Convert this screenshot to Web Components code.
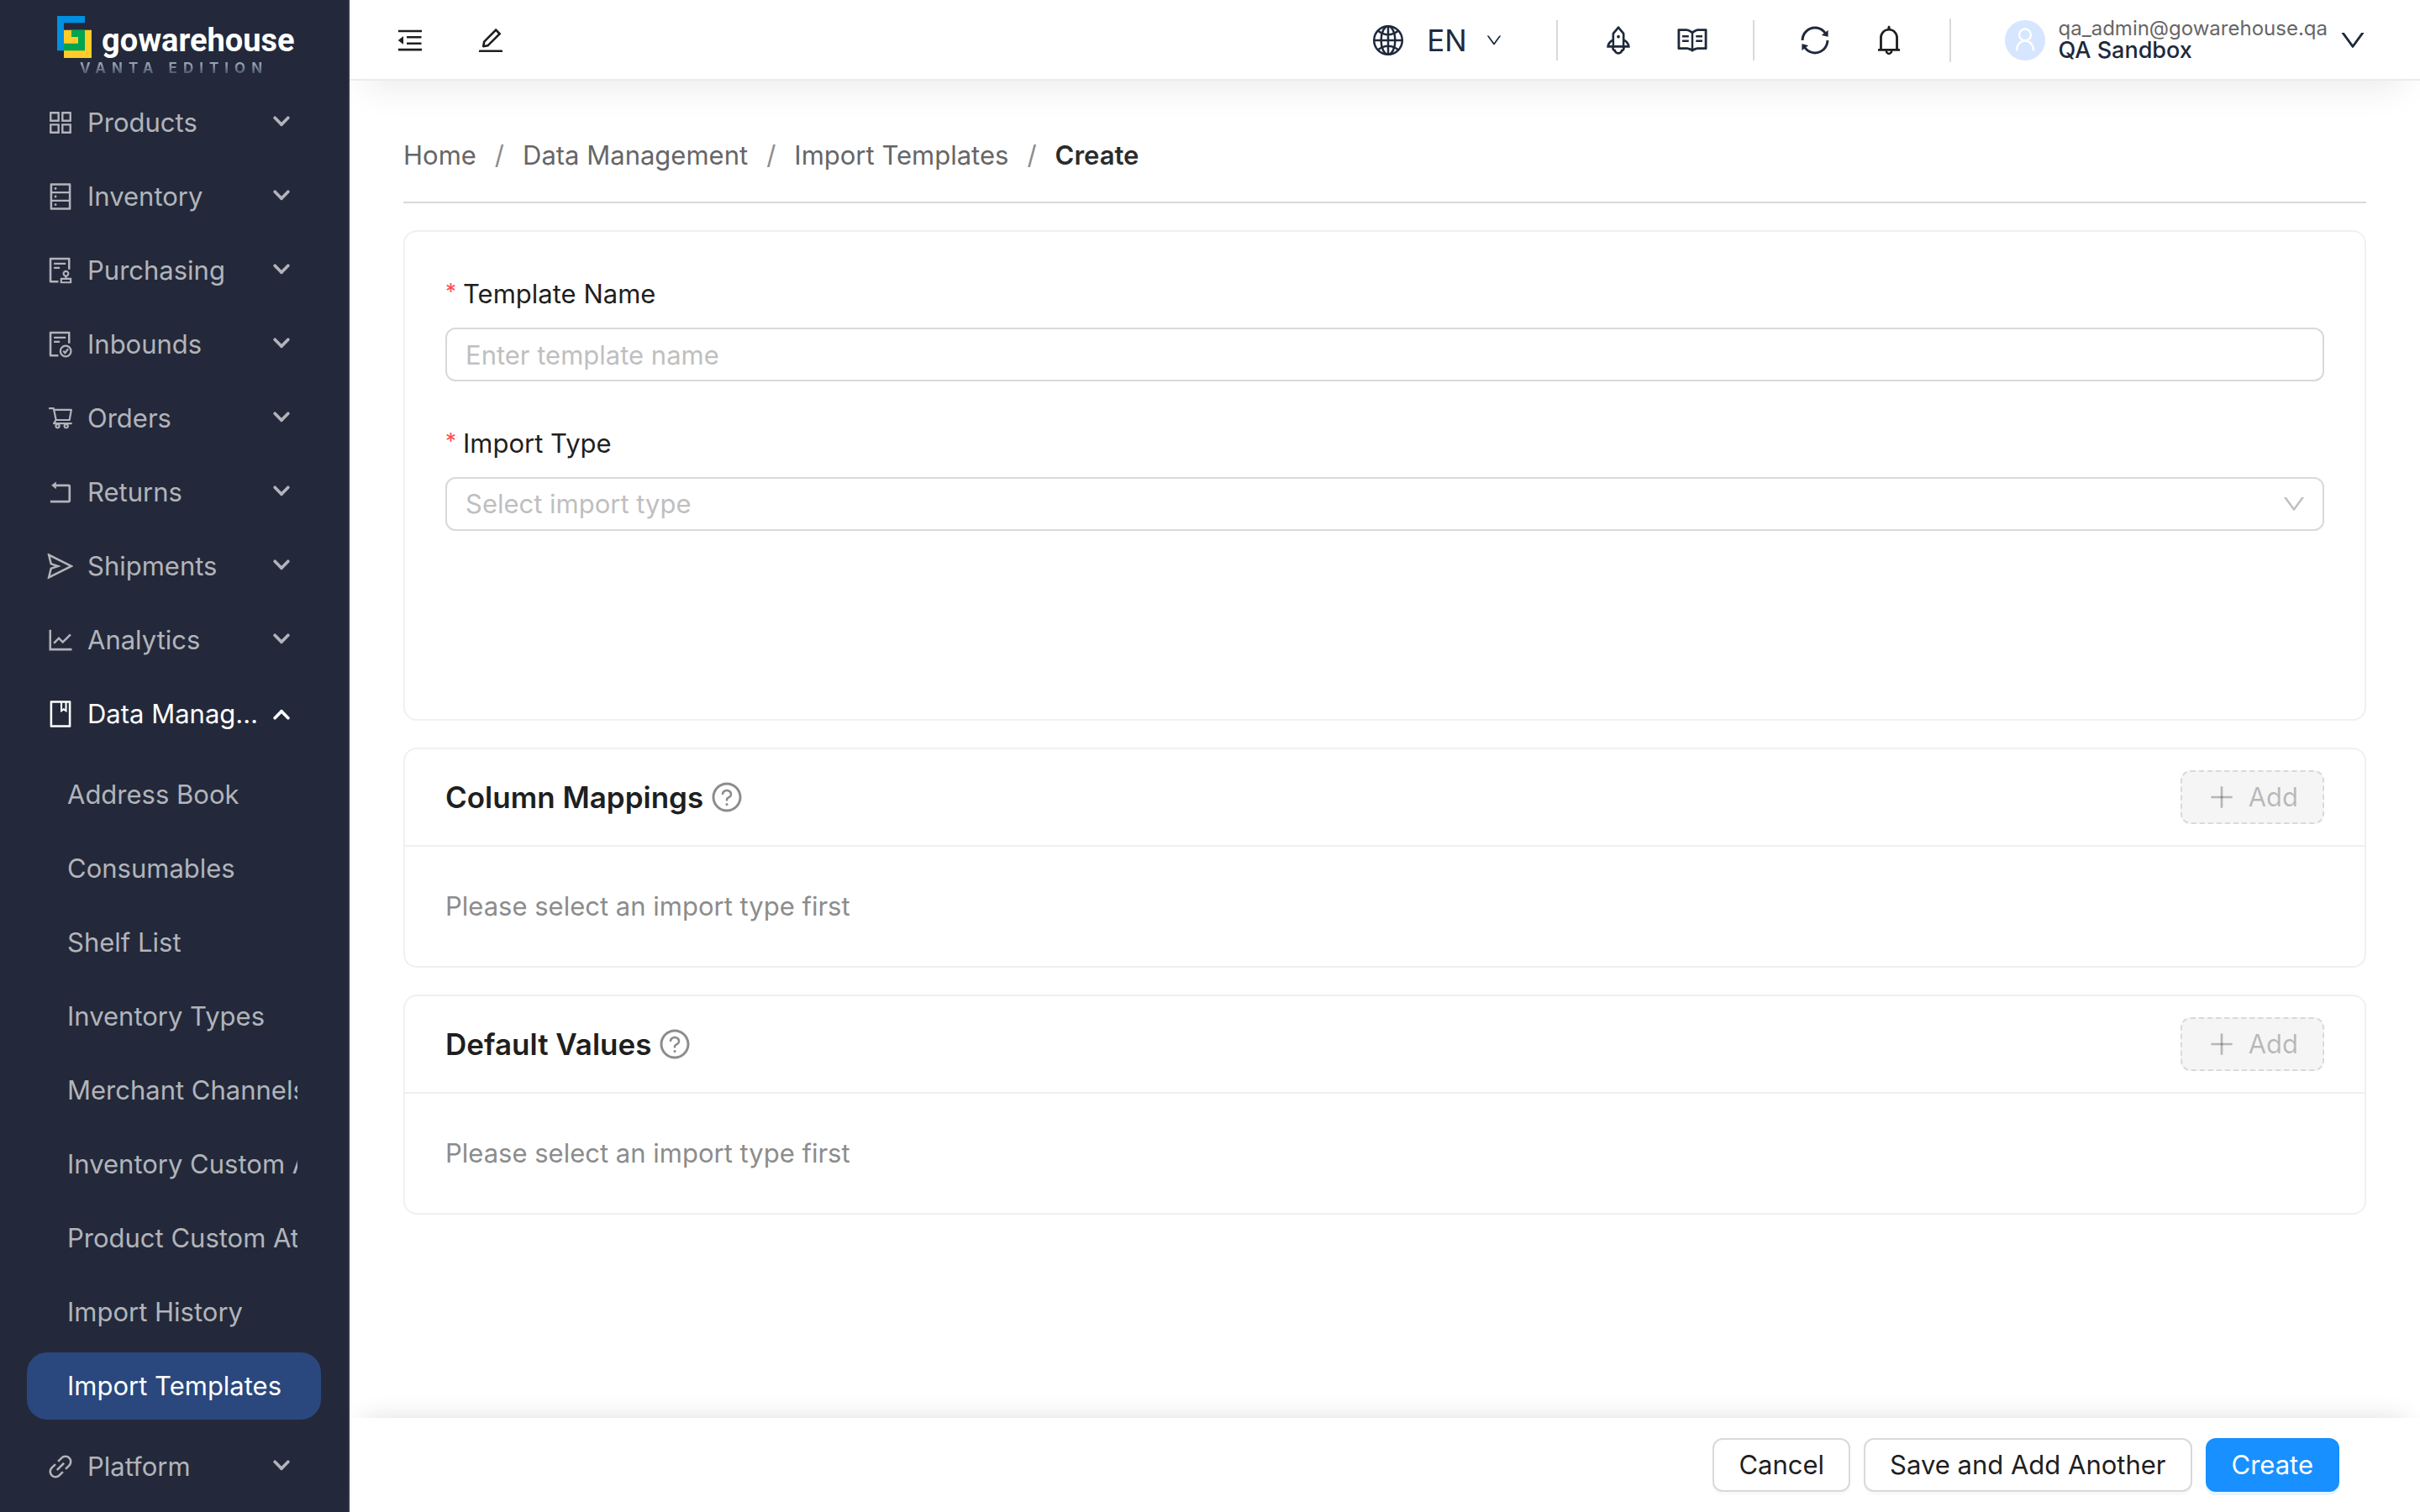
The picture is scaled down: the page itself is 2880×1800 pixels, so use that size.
<!DOCTYPE html>
<html lang="en">
<head>
<meta charset="utf-8">
<meta name="viewport" content="width=device-width, initial-scale=1">
<title>Create Import Template</title>
<style>
  body {
    margin: 0;
    font: 31px/50px Inter, "Liberation Sans", sans-serif;
    color: #1f1f1f;
    background: #fff;
  }
</style>
</head>
<body>
<gw-shell>
  <gw-sidebar slot="side">
    <gw-menu-group icon="appstore" label="Products"></gw-menu-group>
    <gw-menu-group icon="database" label="Inventory"></gw-menu-group>
    <gw-menu-group icon="audit" label="Purchasing"></gw-menu-group>
    <gw-menu-group icon="inbound" label="Inbounds"></gw-menu-group>
    <gw-menu-group icon="cart" label="Orders"></gw-menu-group>
    <gw-menu-group icon="rollback" label="Returns"></gw-menu-group>
    <gw-menu-group icon="send" label="Shipments"></gw-menu-group>
    <gw-menu-group icon="chart" label="Analytics"></gw-menu-group>
    <gw-menu-group icon="book" label="Data Management" open>
      <gw-menu-link>Address Book</gw-menu-link>
      <gw-menu-link>Consumables</gw-menu-link>
      <gw-menu-link>Shelf List</gw-menu-link>
      <gw-menu-link>Inventory Types</gw-menu-link>
      <gw-menu-link>Merchant Channels</gw-menu-link>
      <gw-menu-link>Inventory Custom Attributes</gw-menu-link>
      <gw-menu-link>Product Custom Attributes</gw-menu-link>
      <gw-menu-link>Import History</gw-menu-link>
      <gw-menu-link selected>Import Templates</gw-menu-link>
    </gw-menu-group>
    <gw-menu-group icon="link" label="Platform"></gw-menu-group>
  </gw-sidebar>

  <gw-topbar slot="top" email="qa_admin@gowarehouse.qa" name="QA Sandbox"></gw-topbar>

  <gw-breadcrumb path="Home|Data Management|Import Templates|Create"></gw-breadcrumb>

  <gw-card class="form">
    <gw-field label="Template Name" placeholder="Enter template name"></gw-field>
    <gw-field label="Import Type" placeholder="Select import type" type="select"></gw-field>
  </gw-card>
  <gw-card heading="Column Mappings">Please select an import type first</gw-card>
  <gw-card heading="Default Values">Please select an import type first</gw-card>

  <gw-footer slot="bottom">
    <gw-button>Cancel</gw-button>
    <gw-button>Save and Add Another</gw-button>
    <gw-button kind="primary">Create</gw-button>
  </gw-footer>
</gw-shell>

<script>
// Icon shapes, all on a 1024 grid
const docLines = `<path d="M296 250c-4.400 0-8 3.600-8 8v48c0 4.400 3.600 8 8 8h384c4.400 0 8-3.600 8-8v-48c0-4.400-3.600-8-8-8H296zm184 144H296c-4.400 0-8 3.600-8 8v48c0 4.400 3.600 8 8 8h184c4.400 0 8-3.600 8-8v-48c0-4.400-3.600-8-8-8zm-48 458H208V148h560v320c0 4.400 3.600 8 8 8h56c4.400 0 8-3.600 8-8V108c0-17.700-14.300-32-32-32H168c-17.700 0-32 14.300-32 32v784c0 17.700 14.300 32 32 32h264c4.400 0 8-3.600 8-8v-56c0-4.400-3.600-8-8-8z"/>`;

const icons = {
  appstore: `<path d="M464 144H160c-8.800 0-16 7.200-16 16v304c0 8.800 7.200 16 16 16h304c8.800 0 16-7.200 16-16V160c0-8.800-7.200-16-16-16zm-52 268H212V212h200v200zm452-268H560c-8.800 0-16 7.200-16 16v304c0 8.800 7.200 16 16 16h304c8.800 0 16-7.200 16-16V160c0-8.800-7.200-16-16-16zm-52 268H612V212h200v200zM464 544H160c-8.800 0-16 7.200-16 16v304c0 8.800 7.200 16 16 16h304c8.800 0 16-7.200 16-16V560c0-8.800-7.200-16-16-16zm-52 268H212V612h200v200zm452-268H560c-8.800 0-16 7.200-16 16v304c0 8.800 7.200 16 16 16h304c8.800 0 16-7.200 16-16V560c0-8.800-7.200-16-16-16zm-52 268H612V612h200v200z"/>`,
  database: `<path d="M832 64H192c-17.700 0-32 14.300-32 32v832c0 17.700 14.300 32 32 32h640c17.700 0 32-14.300 32-32V96c0-17.700-14.300-32-32-32zm-600 72h560v208H232V136zm560 480H232V408h560v208zm0 272H232V680h560v208zM304 240a40 40 0 1080 0 40 40 0 10-80 0zm0 272a40 40 0 1080 0 40 40 0 10-80 0zm0 272a40 40 0 1080 0 40 40 0 10-80 0z"/>`,
  audit: docLines + `<path d="M872 764H728v-36.600c46.300-13.800 80-56.600 80-107.400 0-61.900-50.100-112-112-112s-112 50.100-112 112c0 50.700 33.700 93.600 80 107.400V764H520c-8.800 0-16 7.200-16 16v152c0 8.800 7.200 16 16 16h352c8.800 0 16-7.200 16-16V780c0-8.800-7.200-16-16-16zM646 620c0-27.600 22.400-50 50-50s50 22.400 50 50-22.400 50-50 50-50-22.400-50-50zm180 266H566v-60h260v60z"/>`,
  inbound: docLines + `<g fill="none" stroke="currentColor" stroke-width="64"><circle cx="688" cy="740" r="180"/><path d="M606 732l60 72 104-140"/></g>`,
  cart: `<path transform="translate(56 30) scale(.89)" d="M922.900 701.900H327.400l29.900-60.900 496.800-.9c16.800 0 31.200-12 34.200-28.600l68.800-385.100c1.800-10.100-.9-20.500-7.500-28.400a34.990 34.990 0 00-26.600-12.500l-632-2.100-5.400-25.400c-3.400-16.200-18-28-34.600-28H96.500a35.300 35.300 0 100 70.600h125.900L246 312.800l58.100 281.300-74.800 122.100a34.960 34.960 0 00-3 36.800c6 11.900 18.100 19.400 31.500 19.400h62.800a102.430 102.430 0 00-20.600 61.700c0 56.600 46 102.600 102.600 102.600s102.600-46 102.600-102.600c0-22.300-7.400-44-20.600-61.700h161.100a102.430 102.430 0 00-20.600 61.700c0 56.600 46 102.600 102.600 102.600s102.600-46 102.600-102.600c0-22.300-7.400-44-20.600-61.700H923c19.400 0 35.300-15.800 35.300-35.300a35.420 35.420 0 00-35.400-35.200zM305.700 253l575.800 1.900-56.400 315.800-452.300.8L305.700 253zm96.900 612.700c-17.400 0-31.600-14.200-31.600-31.600 0-17.400 14.200-31.600 31.600-31.600s31.600 14.200 31.600 31.600a31.600 31.600 0 01-31.600 31.600zm325.100 0c-17.400 0-31.600-14.200-31.600-31.600 0-17.400 14.200-31.600 31.600-31.600s31.600 14.200 31.600 31.600a31.600 31.600 0 01-31.600 31.600z"/>`,
  rollback: `<path d="M793 242H366v-74c0-6.700-7.700-10.400-12.900-6.300l-142 112a8 8 0 000 12.600l142 112c5.200 4.100 12.900.4 12.900-6.300v-74h415v470H175c-4.400 0-8 3.600-8 8v60c0 4.400 3.600 8 8 8h618c35.300 0 64-28.700 64-64V306c0-35.300-28.700-64-64-64z"/>`,
  send: `<path d="M931.400 498.900L94.900 79.500c-3.400-1.700-7.300-2.100-11-1.200a15.990 15.990 0 00-11.700 19.300l86.200 352.200c1.300 5.300 5.200 9.600 10.400 11.300l147.700 50.700-147.600 50.700c-5.200 1.800-9.100 6-10.300 11.300L72.200 926.500c-.9 3.700-.5 7.600 1.200 10.900 3.900 7.900 13.500 11.100 21.500 7.200l836.500-417c3.100-1.500 5.600-4.100 7.200-7.100 3.900-8 .7-17.600-7.200-21.600zM170.800 826.300l50.300-205.600 295.200-101.300c2.300-.8 4.200-2.600 5-5 1.400-4.200-.8-8.700-5-10.200L221.100 403 171 198.200l628 314.900-628.200 313.200z"/>`,
  chart: `<path d="M888 792H200V168c0-4.400-3.600-8-8-8h-56c-4.400 0-8 3.600-8 8v688c0 4.400 3.600 8 8 8h752c4.400 0 8-3.600 8-8v-56c0-4.400-3.600-8-8-8zM305.800 637.700c3.100 3.100 8.100 3.100 11.300 0l138.300-137.600L583 628.500c3.100 3.100 8.200 3.100 11.300 0l275.400-275.300c3.100-3.100 3.100-8.200 0-11.300l-39.600-39.600a8.030 8.030 0 00-11.300 0l-230 229.900L461.400 404a8.030 8.030 0 00-11.300 0L266.300 586.700a8.030 8.030 0 000 11.300l39.500 39.700z"/>`,
  book: `<path d="M832 64H192c-17.700 0-32 14.300-32 32v832c0 17.700 14.300 32 32 32h640c17.700 0 32-14.300 32-32V96c0-17.700-14.300-32-32-32zm-260 72h96v209.900L621.500 312 572 347.400V136zm220 752H232V136h280v296.900c0 3.300 1 6.600 3 9.300a15.900 15.900 0 0022.300 3.700l83.800-59.900 81.400 59.400c2.700 2 6 3.100 9.400 3.100 8.800 0 16-7.200 16-16V136h64v752z"/>`,
  link: `<path d="M574 665.400a8.030 8.030 0 00-11.300 0L446.500 781.600c-53.800 53.800-144.600 59.500-204 0-59.500-59.500-53.800-150.200 0-204l116.200-116.200c3.100-3.100 3.100-8.200 0-11.300l-39.800-39.800a8.030 8.030 0 00-11.300 0L191.400 526.500c-84.600 84.600-84.600 221.500 0 306s221.500 84.600 306 0l116.200-116.200c3.100-3.100 3.100-8.200 0-11.300L574 665.400zm258.600-474c-84.600-84.600-221.500-84.600-306 0L410.300 307.600a8.030 8.030 0 000 11.300l39.700 39.700c3.100 3.100 8.200 3.100 11.300 0l116.200-116.200c53.800-53.800 144.600-59.500 204 0 59.500 59.500 53.800 150.200 0 204L665.300 562.600a8.030 8.030 0 000 11.300l39.800 39.800c3.100 3.100 8.200 3.100 11.300 0l116.200-116.200c84.500-84.600 84.500-221.500 0-306.100zM610.100 372.300a8.030 8.030 0 00-11.300 0L372.300 598.700a8.030 8.030 0 000 11.300l39.600 39.600c3.100 3.100 8.200 3.100 11.300 0l226.400-226.400c3.100-3.100 3.100-8.200 0-11.300l-39.500-39.600z"/>`,
  fold: `<path d="M408 442h480c4.400 0 8-3.600 8-8v-56c0-4.400-3.600-8-8-8H408c-4.400 0-8 3.600-8 8v56c0 4.400 3.600 8 8 8zm-8 204c0 4.400 3.600 8 8 8h480c4.400 0 8-3.600 8-8v-56c0-4.400-3.600-8-8-8H408c-4.400 0-8 3.600-8 8v56zm504-486H120c-4.400 0-8 3.600-8 8v56c0 4.400 3.600 8 8 8h784c4.400 0 8-3.600 8-8v-56c0-4.400-3.600-8-8-8zm0 632H120c-4.400 0-8 3.600-8 8v56c0 4.400 3.600 8 8 8h784c4.400 0 8-3.600 8-8v-56c0-4.400-3.600-8-8-8zM115.400 518.900L271.700 642c5.800 4.600 14.400.5 14.400-6.900V388.900c0-7.400-8.500-11.500-14.400-6.900L115.400 505.100a8.740 8.740 0 000 13.800z"/>`,
  edit: `<path d="M257.700 752c2 0 4-.2 6-.5L431.900 722c2-.4 3.900-1.300 5.300-2.800l423.900-423.900a9.960 9.960 0 000-14.100L694.900 114.900c-1.900-1.900-4.400-2.900-7.100-2.900s-5.200 1-7.100 2.900L256.800 538.800c-1.500 1.500-2.400 3.300-2.800 5.300l-29.500 168.200a33.500 33.500 0 009.400 29.800c6.600 6.400 14.900 9.900 23.800 9.900zm67.400-174.400L687.800 215l73.300 73.300-362.700 362.600-88.900 15.700 15.600-89zM880 836H144c-17.700 0-32 14.300-32 32v36c0 4.400 3.600 8 8 8h784c4.400 0 8-3.600 8-8v-36c0-17.700-14.300-32-32-32z"/>`,
  globe: `<g fill="none" stroke="currentColor" stroke-width="64"><circle cx="512" cy="512" r="430"/><path d="M512 82v860M82 512h860M205 225q307 230 614 0M205 799q307-230 614 0"/><ellipse cx="512" cy="512" rx="215" ry="430"/></g>`,
  rocket: `<path d="M864 736c0-111.600-65.400-208-160-252.900V317.300c0-15.100-5.300-29.700-15.100-41.200L536.500 95.400C530.100 87.800 521 84 512 84s-18.100 3.800-24.500 11.400L335.100 276.100a63.970 63.970 0 00-15.100 41.200v165.800C225.400 528 160 624.400 160 736h156.500c-2.300 7.200-3.500 15-3.500 23.800 0 22.100 7.600 43.700 21.400 60.800a97.200 97.200 0 0043.100 30.600c23.100 54 75.600 88.800 134.500 88.800 29.100 0 57.300-8.600 81.400-24.800 23.600-15.800 41.900-37.900 53-64a97 97 0 0043.100-30.500 97.520 97.520 0 0021.400-60.800c0-8.400-1.100-16.400-3.100-23.800H864zM762.300 621.400c9.400 14.600 17 30.300 22.500 46.600H700V558.700a211.600 211.600 0 0162.300 62.700zM388 483.100V318.800l124-147 124 147V668H388V483.100zM239.200 668c5.500-16.300 13.100-32 22.500-46.600 16.300-25.200 37.500-46.500 62.300-62.700V668h-84.800zm388.900 116.200c-5.200 3-11.200 4.200-17.100 3.400l-19.500-2.400-2.800 19.400c-5.400 37.900-38.400 66.500-76.700 66.500-38.300 0-71.300-28.600-76.700-66.500l-2.800-19.500-19.500 2.500a27.700 27.700 0 01-17.100-3.500c-8.700-5-14.100-14.300-14.100-24.400 0-10.600 5.900-19.400 14.600-23.800h231.300c8.800 4.500 14.600 13.300 14.600 23.800-.1 10.200-5.500 19.600-14.200 24.500zM464 400a48 48 0 1096 0 48 48 0 10-96 0z"/>`,
  read: `<path d="M928 161H699.200c-49.100 0-97.100 14.100-138.400 40.700L512 233l-48.800-31.300A255.200 255.200 0 00324.800 161H96c-17.700 0-32 14.300-32 32v568c0 17.700 14.300 32 32 32h228.800c49.100 0 97.100 14.100 138.400 40.700l44.400 28.600c1.300.8 2.800 1.300 4.300 1.300s3-.4 4.300-1.300l44.400-28.600C602 807.100 650.100 793 699.200 793H928c17.700 0 32-14.300 32-32V193c0-17.700-14.300-32-32-32zM324.800 721H136V233h188.800c35.400 0 69.800 10.100 99.500 29.200l48.800 31.300 6.900 4.500v462c-47.600-25.600-100.800-39-155.200-39zm563.200 0H699.200c-54.400 0-107.600 13.400-155.200 39V298l6.900-4.500 48.800-31.300c29.700-19.100 64.100-29.200 99.500-29.200H888v488zM396.900 361H211.100c-3.900 0-7.100 3.400-7.100 7.500v45c0 4.100 3.200 7.500 7.100 7.500h185.700c3.900 0 7.100-3.400 7.100-7.500v-45c.1-4.100-3.100-7.500-7-7.500zm223.100 7.500v45c0 4.100 3.200 7.500 7.100 7.500h185.700c3.900 0 7.100-3.400 7.100-7.500v-45c0-4.100-3.200-7.500-7.100-7.500H627.100c-3.900 0-7.100 3.400-7.100 7.500zM396.900 501H211.100c-3.900 0-7.100 3.400-7.100 7.500v45c0 4.100 3.200 7.500 7.100 7.500h185.700c3.900 0 7.100-3.400 7.100-7.500v-45c.1-4.100-3.100-7.500-7-7.500zm415.900 0H627.100c-3.900 0-7.100 3.400-7.100 7.500v45c0 4.100 3.200 7.500 7.100 7.500h185.700c3.900 0 7.100-3.400 7.100-7.500v-45c.1-4.100-3.100-7.500-7-7.500z"/>`,
  sync: `<path d="M168 504.200c1-43.700 10-86.100 26.900-126 17.300-41 42.100-77.700 73.700-109.400S337 212.300 378 195c42.400-17.900 87.400-27 133.900-27s91.500 9.100 133.800 27A341.500 341.500 0 01755 268.800c9.900 9.900 19.200 20.400 27.800 31.400l-60.200 47a8 8 0 003 14.100l175.700 43c5 1.200 9.900-2.600 9.900-7.700l.8-180.900c0-6.700-7.700-10.500-12.900-6.300l-56.400 44.100C765.800 155.100 646.200 92 511.800 92 282.700 92 96.300 275.600 92 503.800a8 8 0 008 8.200h60c4.400 0 7.900-3.500 8-7.800zm756 7.800h-60c-4.400 0-7.900 3.500-8 7.800-1 43.700-10 86.100-26.900 126-17.300 41-42.100 77.800-73.700 109.400A342.450 342.450 0 01512.100 856a342.240 342.240 0 01-243.200-100.800c-9.900-9.900-19.200-20.400-27.800-31.400l60.200-47a8 8 0 00-3-14.100l-175.700-43c-5-1.200-9.900 2.600-9.900 7.700l-.7 181c0 6.700 7.700 10.500 12.900 6.300l56.400-44.100C258.200 868.900 377.800 932 512.200 932c229.200 0 415.500-183.700 419.800-411.800a8 8 0 00-8-8.200z"/>`,
  bell: `<path d="M816 768h-24V428c0-141.100-104.300-257.800-240-277.200V112c0-22.100-17.900-40-40-40s-40 17.900-40 40v38.800C336.300 170.200 232 286.900 232 428v340h-24c-17.700 0-32 14.300-32 32v32c0 4.400 3.600 8 8 8h216c0 61.800 50.200 112 112 112s112-50.200 112-112h216c4.400 0 8-3.600 8-8v-32c0-17.700-14.300-32-32-32zM512 888c-26.500 0-48-21.500-48-48h96c0 26.500-21.500 48-48 48zM304 768V428c0-55.600 21.600-107.800 60.900-147.100S456.400 220 512 220c55.600 0 107.800 21.600 147.100 60.900S720 372.400 720 428v340H304z"/>`,
  user: `<g fill="none" stroke="currentColor" stroke-width="76"><circle cx="512" cy="300" r="220"/><path d="M192 900c0-210 130-370 320-370s320 160 320 370"/></g>`,
  down: `<path d="M884 256h-75c-5.100 0-9.900 2.500-12.900 6.600L512 654.200 227.900 262.600c-3-4.100-7.800-6.600-12.900-6.600h-75c-6.500 0-10.300 7.400-6.500 12.700l352.600 486.100c12.800 17.600 39 17.600 51.700 0l352.600-486.100c3.900-5.300.1-12.700-6.400-12.700z"/>`,
  // the two strokes overlap at the tip
  arrow: `<g stroke="currentColor" stroke-width="190" stroke-linecap="round"><path d="M110 270L512 680"/><path d="M914 270L512 680"/></g>`,
  plus: `<path d="M482 152h60q8 0 8 8v704q0 8-8 8h-60q-8 0-8-8V160q0-8 8-8z"/><path d="M160 474h704q8 0 8 8v60q0 8-8 8H160q-8 0-8-8v-60q0-8 8-8z"/>`,
  question: `<path d="M512 64C264.600 64 64 264.600 64 512s200.600 448 448 448 448-200.600 448-448S759.400 64 512 64zm0 820c-205.400 0-372-166.600-372-372s166.600-372 372-372 372 166.600 372 372-166.600 372-372 372z"/><path d="M623.600 316.700C593.600 290.400 554 276 512 276s-81.600 14.500-111.600 40.700C369.200 344 352 380.700 352 420v7.600c0 4.400 3.600 8 8 8h48c4.400 0 8-3.600 8-8V420c0-44.100 43.100-80 96-80s96 35.900 96 80c0 31.100-22 59.600-56.100 72.700-21.200 8.100-39.200 22.300-52.100 40.900-13.100 19-19.900 41.800-19.900 64.900V620c0 4.400 3.600 8 8 8h48c4.400 0 8-3.600 8-8v-22.700a48.300 48.300 0 0130.900-44.800c59-22.700 97.100-74.700 97.100-132.500.1-39.300-17.100-76-48.300-103.300zM472 732a40 40 0 1080 0 40 40 0 10-80 0z"/>`,
};

class GwElement extends HTMLElement {
  constructor() {
    super();
    this.attachShadow({ mode: "open" });
  }

  connectedCallback() {
    const template = document.createElement("template");
    template.innerHTML = `<style>
      *, *::before { box-sizing: border-box; }
      button { font: inherit; color: inherit; background: none; border: 0; padding: 0; cursor: pointer; }
      a { color: inherit; text-decoration: none; }
      ${this.styles()}
    </style>${this.markup()}`;
    this.shadowRoot.replaceChildren(template.content.cloneNode(true));
  }

  attr(name) {
    return this.getAttribute(name) || "";
  }
}

class GwIcon extends GwElement {
  styles() {
    return `
      :host { display: block; flex: none; width: var(--size, 36px); height: var(--size, 36px); }
      svg { display: block; width: 100%; height: 100%; overflow: visible; }
    `;
  }
  markup() {
    return `<svg viewBox="0 0 1024 1024" fill="currentColor" aria-hidden="true">${icons[this.attr("name")]}</svg>`;
  }
}

class GwShell extends GwElement {
  styles() {
    return `
      :host { display: grid; grid-template-columns: 416px minmax(0, 1fr); height: 100vh; }
      .column { display: flex; flex-direction: column; min-height: 0; }
      main { flex: 1; min-height: 0; overflow: hidden; padding: 0 64px; display: flex; flex-direction: column; gap: 32px; }
      slot[name="side"] { display: block; min-height: 0; height: 100vh; }
    `;
  }
  markup() {
    return `
      <slot name="side"></slot>
      <div class="column">
        <slot name="top"></slot>
        <main><slot></slot></main>
        <slot name="bottom"></slot>
      </div>`;
  }
}

class GwLogo extends GwElement {
  styles() {
    return `
      :host { display: block; height: 98px; padding: 19px 0 0 68px; color: #fff; }
      .row { display: flex; gap: 12px; height: 50px; }
      svg { width: 41px; height: 50px; flex: none; }
      .word { font: bold 38px/58px Roboto, "Liberation Sans", sans-serif; }
      .edition {
        padding-left: 27px; font-size: 17px; line-height: 24px; font-weight: 700; letter-spacing: 7px;
        background: linear-gradient(#94a0b4 30%, #47526a 80%); background-clip: text; color: transparent;
      }
    `;
  }
  markup() {
    return `
      <div class="row">
        <svg viewBox="0 0 123 150" aria-hidden="true">
          <path fill="#0090e0" d="M0 0H99V25H24V124H0z"/>
          <path fill="#ffcc29" d="M24 50H123V150H24z"/>
          <path fill="#00a551" d="M51 50H99V124H24V98H75V75H51z"/>
        </svg>
        <span class="word">gowarehouse</span>
      </div>
      <div class="edition">VANTA EDITION</div>`;
  }
}

class GwSidebar extends GwElement {
  styles() {
    return `
      :host { display: block; height: 100%; overflow: hidden; background: #23293a; border-right: 2px solid #30374a; box-sizing: border-box; color: #b2b4ba; }
      nav { display: flex; flex-direction: column; gap: 8px; padding: 8px 32px; }
    `;
  }
  markup() {
    return `<gw-logo></gw-logo><nav><slot></slot></nav>`;
  }
}

class GwMenuGroup extends GwElement {
  styles() {
    return `
      :host { display: block; }
      :host([open]) button { color: #fff; }
      button { display: flex; align-items: center; width: 100%; height: 80px; padding: 0 37px 0 22px; text-align: left; }
      .label { flex: 1; min-width: 0; margin: 0 16px 0 14px; overflow: hidden; text-overflow: ellipsis; white-space: nowrap; }
      .arrow { --size: 20px; margin-bottom: 2px; }
      :host([open]) .arrow { transform: rotate(180deg); margin-bottom: 0; }
      .items { display: none; }
      :host([open]) .items { display: flex; flex-direction: column; gap: 8px; padding: 16px 0 8px; }
    `;
  }
  markup() {
    return `
      <button type="button" aria-expanded="${this.hasAttribute("open")}">
        <gw-icon name="${this.attr("icon")}"></gw-icon>
        <span class="label">${this.attr("label")}</span>
        <gw-icon class="arrow" name="arrow"></gw-icon>
      </button>
      <div class="items"><slot></slot></div>`;
  }
}

class GwMenuLink extends GwElement {
  styles() {
    return `
      :host { display: block; }
      a { display: block; height: 80px; line-height: 80px; padding: 0 28px 0 48px; border-radius: 24px; }
      span { display: block; overflow: hidden; white-space: nowrap; }
      :host([selected]) a { background: #2a487d; color: #fff; }
    `;
  }
  markup() {
    return `<a href="#"><span><slot></slot></span></a>`;
  }
}

class GwTopbar extends GwElement {
  styles() {
    return `
      :host { display: block; position: relative; z-index: 1; }
      header {
        display: flex; align-items: center; height: 96px; box-sizing: border-box; padding: 2px 62px 0 54px;
        background: #fff; border-bottom: 2px solid #ebebeb; color: #1e293b;
        box-shadow: 0 30px 40px -20px rgba(0, 0, 0, .08);
      }
      button { display: flex; align-items: center; }
      .dark { color: #1f1f1f; }
      .dark + .dark { margin-left: 60px; }
      .lang { margin-left: auto; margin-right: 63px; font-size: 35px; --size: 40px; }
      .lang span { margin: 0 21px 0 26px; }
      .lang .caret { --size: 22px; }
      .tools { display: flex; gap: 48px; padding: 4px 52px; border-left: 2px solid #d9d9d9; --size: 40px; }
      .bell { color: #1f1f1f; }
      .account { border-left: 2px solid #d9d9d9; padding-left: 64px; text-align: left; }
      .avatar { display: grid; place-items: center; width: 48px; height: 48px; border-radius: 50%; background: #d6e6fe; color: #fff; --size: 32px; }
      .who { margin: 0 12px 0 16px; }
      .mail { display: block; font-size: 24px; line-height: 24px; color: #666; }
      .name { display: block; font-size: 27px; font-weight: 500; line-height: 28px; }
    `;
  }
  markup() {
    return `
      <header>
        <button class="dark" type="button" aria-label="Collapse menu"><gw-icon name="fold"></gw-icon></button>
        <button class="dark" type="button" aria-label="Edit"><gw-icon name="edit"></gw-icon></button>
        <button class="lang" type="button">
          <gw-icon name="globe"></gw-icon><span>EN</span><gw-icon class="caret" name="down"></gw-icon>
        </button>
        <div class="tools">
          <button type="button" aria-label="What's new"><gw-icon name="rocket"></gw-icon></button>
          <button type="button" aria-label="Docs"><gw-icon name="read"></gw-icon></button>
        </div>
        <div class="tools">
          <button type="button" aria-label="Refresh"><gw-icon name="sync"></gw-icon></button>
          <button class="bell" type="button" aria-label="Notifications"><gw-icon name="bell"></gw-icon></button>
        </div>
        <button class="account" type="button">
          <span class="avatar"><gw-icon name="user"></gw-icon></span>
          <span class="who">
            <span class="mail">${this.attr("email")}</span>
            <span class="name">${this.attr("name")}</span>
          </span>
          <gw-icon name="down"></gw-icon>
        </button>
      </header>`;
  }
}

class GwBreadcrumb extends GwElement {
  styles() {
    return `
      :host { display: block; position: relative; z-index: 2; color: #666; }
      ol { display: flex; margin: 0; padding: 64px 0 30px; list-style: none; border-bottom: 2px solid #d9d9d9; line-height: 50px; }
      li + li::before { content: "/"; margin: 0 22px; color: #8c8c8c; }
      [aria-current] { font-weight: 600; color: #2b2b2b; }
    `;
  }
  markup() {
    const parts = this.attr("path").split("|");
    const last = parts.pop();
    return `<nav aria-label="Breadcrumb"><ol>
      ${parts.map((part) => `<li><a href="#">${part}</a></li>`).join("")}
      <li><span aria-current="page">${last}</span></li>
    </ol></nav>`;
  }
}

class GwCard extends GwElement {
  styles() {
    return `
      :host { display: block; border: 2px solid #f0f0f0; border-radius: 16px; color: #8c8c8c; }
      .head { display: flex; align-items: center; height: 116px; padding: 0 48px; border-bottom: 2px solid #f0f0f0; color: #1f1f1f; }
      h2 { margin: 0 8px 0 0; font-size: 35px; font-weight: 600; }
      .head > gw-icon { --size: 40px; color: #8c8c8c; }
      gw-button { margin-left: auto; }
      .body { padding: 48px; line-height: 46px; }
      :host(.form) .body { display: flex; flex-direction: column; gap: 48px; min-height: 580px; line-height: 50px; }
    `;
  }
  markup() {
    const heading = this.attr("heading");
    const head = heading ? `
      <div class="head">
        <h2>${heading}</h2>
        <gw-icon name="question"></gw-icon>
        <gw-button kind="dashed" icon="plus" disabled>Add</gw-button>
      </div>` : "";
    return `${head}<div class="body"><slot></slot></div>`;
  }
}

class GwField extends GwElement {
  styles() {
    return `
      :host { display: block; color: #1f1f1f; }
      label { display: flex; margin-bottom: 14px; line-height: 52px; }
      label::before { content: "*"; margin-right: 8px; font-size: 26px; line-height: 46px; color: #ff4d4f; }
      .box { display: grid; align-items: center; }
      .box > * { grid-area: 1 / 1; }
      input, select {
        width: 100%; height: 64px; padding: 0 22px; font: inherit; color: #1f1f1f;
        background: #fff; border: 2px solid #d9d9d9; border-radius: 12px; appearance: none; outline: 0;
      }
      select, input::placeholder { color: #bfbfbf; opacity: 1; }
      gw-icon { --size: 32px; justify-self: end; margin-right: 20px; color: #bfbfbf; pointer-events: none; }
    `;
  }
  markup() {
    const hint = this.attr("placeholder");
    const control = this.attr("type") === "select"
      ? `<select id="control" required><option value="">${hint}</option></select><gw-icon name="down"></gw-icon>`
      : `<input id="control" type="text" placeholder="${hint}" required>`;
    return `<label for="control">${this.attr("label")}</label><div class="box">${control}</div>`;
  }
}

class GwButton extends GwElement {
  styles() {
    return `
      :host { display: block; }
      button {
        display: flex; align-items: center; gap: 14px; height: 64px; padding: 0 29px; white-space: nowrap;
        color: #1f1f1f; background: #fff; border: 2px solid #d9d9d9; border-radius: 12px; box-shadow: 0 4px 0 rgba(0, 0, 0, .02);
      }
      .primary { color: #fff; background: #1890ff; border-color: #1890ff; box-shadow: 0 4px 0 rgba(5, 145, 255, .1); }
      .dashed { border-style: dashed; }
      button:disabled { color: rgba(0, 0, 0, .25); background: #f5f5f5; box-shadow: none; cursor: not-allowed; }
    `;
  }
  markup() {
    const icon = this.attr("icon");
    return `
      <button type="button" class="${this.attr("kind")}" ${this.hasAttribute("disabled") ? "disabled" : ""}>
        ${icon ? `<gw-icon name="${icon}"></gw-icon>` : ""}<slot></slot>
      </button>`;
  }
}

class GwFooter extends GwElement {
  styles() {
    return `
      :host { display: block; position: relative; }
      footer {
        display: flex; justify-content: flex-end; gap: 16px; padding: 24px 96px;
        background: #fff; box-shadow: 0 -12px 32px -16px rgba(0, 0, 0, .16);
      }
    `;
  }
  markup() {
    return `<footer><slot></slot></footer>`;
  }
}

customElements.define("gw-icon", GwIcon);
customElements.define("gw-shell", GwShell);
customElements.define("gw-logo", GwLogo);
customElements.define("gw-sidebar", GwSidebar);
customElements.define("gw-menu-group", GwMenuGroup);
customElements.define("gw-menu-link", GwMenuLink);
customElements.define("gw-topbar", GwTopbar);
customElements.define("gw-breadcrumb", GwBreadcrumb);
customElements.define("gw-card", GwCard);
customElements.define("gw-field", GwField);
customElements.define("gw-button", GwButton);
customElements.define("gw-footer", GwFooter);
</script>
</body>
</html>
